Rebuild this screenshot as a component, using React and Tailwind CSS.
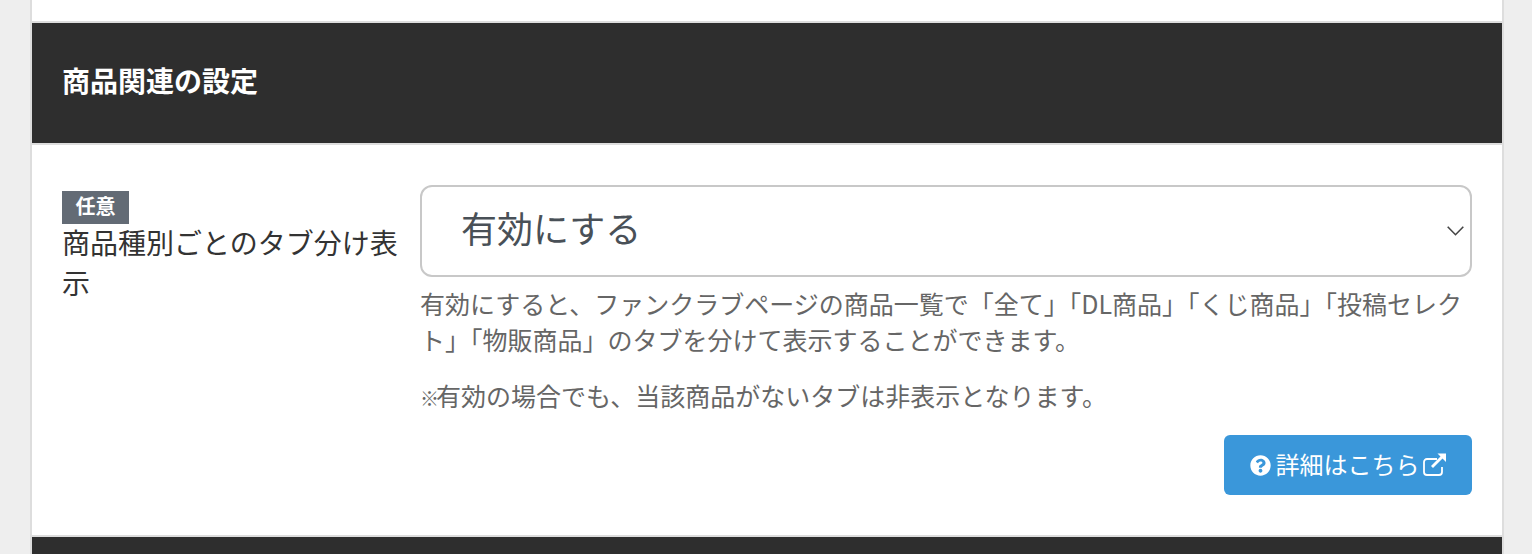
import { FaQuestionCircle } from "react-icons/fa";

function SectionHead({ children }) {
  return (
    <div className="h-[124px] shrink-0 flex items-center px-[30px] pb-[7px] bg-[#2e2e2e] border-y-2 border-[#dddddd] text-white text-[28px] leading-none font-bold">
      {children}
    </div>
  );
}

export default function App() {
  return (
    <div className="h-[554px] overflow-hidden bg-[#eeeeee] pl-[30px] pr-[28px] font-['Noto_Sans_CJK_JP',sans-serif]">
      <div className="h-full border-x-2 border-[#dddddd] bg-white pt-[21px]">
        <SectionHead>商品関連の設定</SectionHead>
        <div className="h-[390px] flex gap-[20px] pt-[40px] px-[30px]">
          <div className="w-[338px] shrink-0 pt-[6px] text-[#333333]">
            <span className="block w-[67px] h-[33px] bg-[#636b75] text-white text-[20px] leading-[30px] font-bold text-center">
              任意
            </span>
            <p className="text-[28px] leading-[40px] mt-[-2px]">商品種別ごとのタブ分け表示</p>
          </div>
          <div className="flex-1 min-w-0">
            <div className="relative h-[92px] rounded-[12px] border-2 border-[#c8c8c8] flex items-center pl-[39px] pb-[8px] text-[36px] text-[#495057]">
              有効にする
              <svg className="absolute right-[6px] top-[39px] text-[#444444]" width="17" height="10" viewBox="0 0 17 10" fill="none" stroke="currentColor" strokeWidth="1.6">
                <path d="M0.7 0.7 L8.5 8.7 L16.3 0.7" />
              </svg>
            </div>
            <p className="mt-[8px] text-[25px] leading-[36px] text-[#666666]">
              有効にすると、ファンクラブページの商品一覧で「全て」「DL商品」「くじ商品」「投稿セレクト」「物販商品」のタブを分けて表示することができます。
            </p>
            <p className="mt-[20px] text-[25px] leading-[36px] text-[#666666]">
              <span className="text-[19px] leading-none font-bold mr-[-3px]">※</span>有効の場合でも、当該商品がないタブは非表示となります。
            </p>
            <div className="flex justify-end mt-[22px]">
              <a className="w-[248px] h-[60px] rounded-[6px] bg-[#3a97da] text-white text-[24px] flex items-center justify-center gap-[5px]">
                <FaQuestionCircle size={21} />
                <span className="mb-[3px]">詳細はこちら</span>
                <svg width="25" height="25" viewBox="0 0 25 25" fill="none" stroke="currentColor" className="mb-[2px] ml-[-3px]">
                  <path d="M15 7 H5 a3 3 0 0 0 -3 3 V20 a3 3 0 0 0 3 3 H17 a3 3 0 0 0 3 -3 V15" strokeWidth="1.8" />
                  <path d="M10 15 L21 4" strokeWidth="2.8" />
                  <path d="M15.5 1.5 H24 V10 Z" fill="currentColor" stroke="none" />
                </svg>
              </a>
            </div>
          </div>
        </div>
        <div className="h-[30px] bg-[#2e2e2e] border-t-2 border-[#dddddd]" />
      </div>
    </div>
  );
}
